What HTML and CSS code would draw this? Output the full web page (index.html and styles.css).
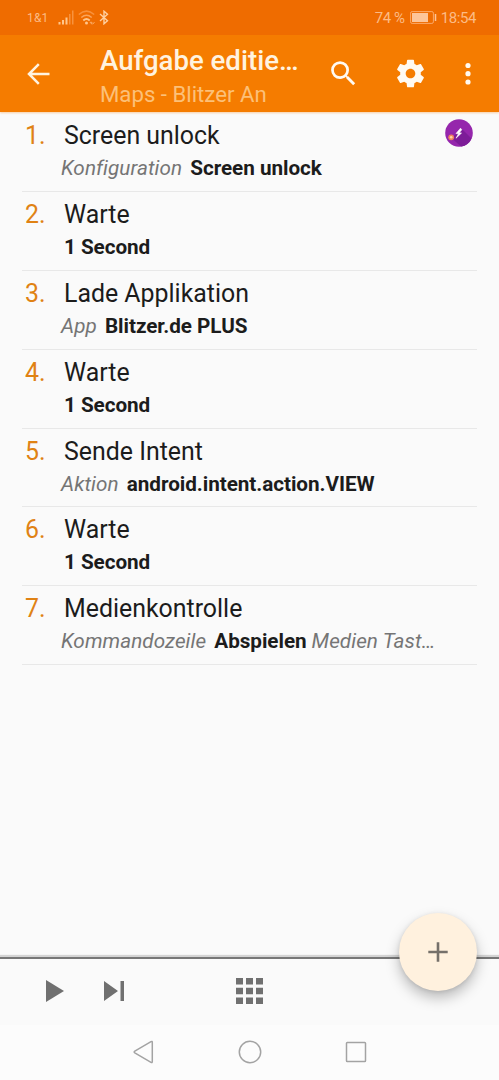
FILE: index.html
```html
<!DOCTYPE html>
<html lang="de">
<head>
    <meta charset="UTF-8">
    <meta name="viewport" content="width=device-width, initial-scale=1.0">
    <title>Aufgabe editieren</title>
    <link rel="stylesheet" href="styles.css">
</head>
<body>
    <div class="screen">
        <!-- Status bar -->
        <div class="status">
            <span class="carrier">1&amp;1</span>
            <svg class="signal" width="17" height="15" viewBox="0 0 17 15">
                <path d="M0.5 12h2v2.500h-2zM4 10h2v4.500h-2zM7.500 7.500h2v7h-2z" fill="#ffc68c"/>
                <path d="M11 4h1.500v10.500h-1.500zM14 0.500h1.500v14h-1.500z" fill="#f8923d"/>
            </svg>
            <svg class="wifi" width="18" height="15" viewBox="0 0 18 15">
                <path d="M0.800 4.500Q8.500-2.300 16.200 4.500" fill="none" stroke="#f8923d" stroke-width="1.500"/>
                <path d="M3.300 7.500Q8.500 3 13.700 7.500" fill="none" stroke="#faa55c" stroke-width="1.500"/>
                <path d="M5.300 10.500Q8.500 7.500 11.700 10.500" fill="none" stroke="#ffc68c" stroke-width="1.800"/>
                <circle cx="8.500" cy="13" r="1.500" fill="#ffc68c"/>
                <path d="M12 12.300h2v2zM15 14l1.500-2" stroke="#faa55c" fill="#faa55c"/>
            </svg>
            <svg class="bluetooth" width="10" height="15" viewBox="0 0 10 15">
                <path d="M1 4l7.500 6.700L5 13.800V1.200l3.500 3.100L1 11" fill="none" stroke="#ffd0a0" stroke-width="1.400"/>
            </svg>
            <span class="percent">74 %</span>
            <svg class="battery" width="27" height="13" viewBox="0 0 27 13">
                <rect x="0.600" y="0.600" width="22.800" height="11.800" rx="1.500" fill="none" stroke="#fba968"/>
                <rect x="2" y="2" width="16" height="9" fill="#fdc598"/>
                <path d="M25.500 3v7" stroke="#fdc598" stroke-width="1.500"/>
            </svg>
            <span class="clock">18:54</span>
        </div>

        <!-- Action bar -->
        <header class="toolbar">
            <svg class="back" width="24" height="22" viewBox="0 0 24 22">
                <path d="M22.500 11H2M11.800 1.200L2 11l9.800 9.800" fill="none" stroke="#fff3e0" stroke-width="2.500"/>
            </svg>
            <div class="heading">
                <h1>Aufgabe editie…</h1>
                <p>Maps - Blitzer An</p>
            </div>
            <svg class="search" width="33" height="33" viewBox="0 0 24 24" fill="#fffaf2">
                <path d="M15.500 14h-.79l-.28-.27A6.471 6.471 0 0 0 16 9.500 6.500 6.500 0 1 0 9.500 16c1.610 0 3.090-.59 4.230-1.570l.27.28v.79l5 4.990L20.490 19l-4.990-5zm-6 0C7.010 14 5 11.990 5 9.500S7.010 5 9.500 5 14 7.010 14 9.500 11.990 14 9.500 14z"/>
            </svg>
            <svg class="gear" width="33" height="33" viewBox="0 0 24 24" fill="#fffaf2">
                <path d="M19.430 12.980c.04-.32.07-.64.07-.98s-.03-.66-.07-.98l2.110-1.650c.19-.15.24-.42.12-.64l-2-3.460c-.12-.22-.39-.3-.61-.22l-2.490 1c-.52-.4-1.080-.73-1.690-.98l-.38-2.650C14.460 2.180 14.250 2 14 2h-4c-.25 0-.46.18-.49.42l-.38 2.650c-.61.25-1.170.59-1.690.98l-2.490-1c-.23-.09-.49 0-.61.22l-2 3.460c-.13.22-.07.49.12.64l2.110 1.650c-.04.32-.07.65-.07.98s.03.66.07.98l-2.110 1.650c-.19.15-.24.42-.12.64l2 3.460c.12.22.39.3.61.22l2.490-1c.52.4 1.080.73 1.690.98l.38 2.650c.03.24.24.42.49.42h4c.25 0 .46-.18.49-.42l.38-2.650c.61-.25 1.170-.59 1.690-.98l2.490 1c.23.09.49 0 .61-.22l2-3.460c.12-.22.07-.49-.12-.64l-2.110-1.650zM12 15.500c-1.930 0-3.500-1.570-3.500-3.500s1.570-3.500 3.500-3.500 3.500 1.570 3.500 3.500-1.570 3.500-3.500 3.500z"/>
            </svg>
            <svg class="more" width="8" height="24" viewBox="0 0 8 24" fill="#fffaf2">
                <circle cx="4" cy="3.500" r="2.600"/>
                <circle cx="4" cy="11.700" r="2.600"/>
                <circle cx="4" cy="20" r="2.600"/>
            </svg>
        </header>

        <!-- Action list -->
        <ol class="actions">
            <li class="action">
                <span class="num">1.</span>
                <span class="name">Screen unlock</span>
                <svg class="plugin" width="28" height="28" viewBox="0 0 28 28">
                    <circle cx="14" cy="14" r="13.800" fill="#9526ac"/>
                    <path d="M17 10l9.500 9.500A13.800 13.800 0 0 1 16 27.600L6.500 19z" fill="#7d1c98"/>
                    <path d="M15.500 9.200l-4.500 5.300 2.500.3-2.500 4.400 5.500-5.100-2.300-.4 2.600-2.900z" fill="#fff" stroke="#fff" stroke-width=".6"/>
                    <circle cx="6.200" cy="18.300" r="2.900" fill="#ef8060"/>
                    <circle cx="6.200" cy="18.300" r="1.300" fill="#ffd6a0"/>
                </svg>
                <p class="detail"><i>Konfiguration</i> <b>Screen unlock</b></p>
            </li>
            <li class="action">
                <span class="num">2.</span>
                <span class="name">Warte</span>
                <p class="detail plain"><b>1 Second</b></p>
            </li>
            <li class="action">
                <span class="num">3.</span>
                <span class="name">Lade Applikation</span>
                <p class="detail"><i>App</i> <b>Blitzer.de PLUS</b></p>
            </li>
            <li class="action">
                <span class="num">4.</span>
                <span class="name">Warte</span>
                <p class="detail plain"><b>1 Second</b></p>
            </li>
            <li class="action">
                <span class="num">5.</span>
                <span class="name">Sende Intent</span>
                <p class="detail"><i>Aktion</i> <b>android.intent.action.VIEW</b></p>
            </li>
            <li class="action">
                <span class="num">6.</span>
                <span class="name">Warte</span>
                <p class="detail plain"><b>1 Second</b></p>
            </li>
            <li class="action">
                <span class="num">7.</span>
                <span class="name">Medienkontrolle</span>
                <p class="detail"><i>Kommandozeile</i> <b>Abspielen</b><i class="next">Medien Tast…</i></p>
            </li>
        </ol>

        <!-- Bottom bar -->
        <div class="bottom">
            <svg class="play" width="18" height="22" viewBox="0 0 18 22"><path d="M0 0l18 11L0 22z" fill="#707070"/></svg>
            <svg class="step" width="20" height="20" viewBox="0 0 20 20"><path d="M0 0l14 10L0 20zM16.500 0h3.500v20h-3.500z" fill="#707070"/></svg>
            <svg class="grid" width="27" height="26" viewBox="0 0 27 26">
                <path d="M0 0h7v6.500H0zM10 0h7v6.500h-7zM20 0h7v6.500h-7zM0 9.800h7v6.500H0zM10 9.800h7v6.500h-7zM20 9.800h7v6.500h-7zM0 19.500h7V26H0zM10 19.500h7V26h-7zM20 19.500h7V26h-7z" fill="#707070"/>
            </svg>
            <div class="fab">
                <svg width="20" height="20" viewBox="0 0 20 20"><path d="M10 .3v19.400M.3 10h19.400" stroke="#75706a" stroke-width="2.600"/></svg>
            </div>
        </div>

        <!-- System navigation -->
        <nav class="navbar">
            <svg width="22" height="24" viewBox="0 0 22 24"><path d="M1.800 11.100L18 1.600q1.300-.6 1.300.8v19.200q0 1.400-1.300.8L1.800 12.900q-1.300-.9 0-1.800z" fill="none" stroke="#a3a3a3" stroke-width="1.500"/></svg>
            <svg width="24" height="24" viewBox="0 0 24 24"><circle cx="12" cy="12" r="10.700" fill="none" stroke="#a3a3a3" stroke-width="1.500"/></svg>
            <svg width="22" height="22" viewBox="0 0 22 22"><rect x="1.500" y="1.500" width="19" height="19" rx=".8" fill="none" stroke="#a3a3a3" stroke-width="1.500"/></svg>
        </nav>
    </div>
</body>
</html>
```
FILE: styles.css
```css
/* Reset styles */
* {
    margin: 0;
    padding: 0;
    box-sizing: border-box;
}

body {
    font-family: Roboto, sans-serif;
    background-color: #fafafa;
    color: #1c1c1c;
}

svg {
    display: block;
    flex: none;
}

.screen {
    display: flex;
    flex-direction: column;
    width: 499px;
    height: 1080px;
    overflow: hidden;
}

/* Status bar */
.status {
    display: flex;
    align-items: center;
    height: 35px;
    padding: 0 23px 0 27px;
    background-color: #ef6c00;
    color: #fcbb85;
    font-size: 15px;
    letter-spacing: -0.4px;
    white-space: nowrap;
}

.carrier {
    width: 31px;
    font-size: 12px;
    letter-spacing: 0.2px;
}

.wifi {
    margin-left: 3px;
}

.bluetooth {
    margin-left: 3px;
}

.percent {
    margin-left: auto;
}

.battery {
    margin: 0 4px 0 5px;
}

/* Toolbar */
.toolbar {
    display: flex;
    align-items: center;
    height: 77px;
    padding: 0 27px;
    background-color: #f57c00;
    box-shadow: 0 1px 2px rgba(245, 124, 0, 0.35);
    white-space: nowrap;
}

.heading {
    width: 200px;
    margin-left: 49px;
    margin-right: 27px;
    padding-top: 8px;
}

h1 {
    color: #fff3e0;
    font-size: 27.6px;
    font-weight: 500;
    line-height: 32px;
}

.heading p {
    color: #fcc078;
    font-size: 22.2px;
    line-height: 34px;
}

.gear {
    margin-left: 34px;
}

.more {
    margin-left: auto;
}

/* Action list */
.actions {
    flex: 1;
    padding: 1px 22px 0;
    list-style: none;
}

.action {
    display: grid;
    grid-template-columns: 39px 1fr auto;
    grid-template-rows: 30px 26px;
    row-gap: 4px;
    height: 78.9px;
    padding: 8px 4px 0 3px;
    border-bottom: 1px solid #e8e8e8;
    white-space: nowrap;
}

.num,
.name {
    font-size: 24.9px;
    line-height: 30px;
}

.num {
    color: #e08214;
}

.plugin {
    margin-top: -2px;
}

.detail {
    grid-column: 2 / 4;
    margin-left: -3px;
    font-size: 20.7px;
    line-height: 26px;
}

.detail.plain {
    margin-left: 0;
}

.detail b {
    letter-spacing: -0.05px;
}

.detail i {
    margin-right: 3px;
    color: #757575;
    letter-spacing: 0.06px;
}

.detail .next {
    margin-left: 5px;
}

/* Bottom bar */
.bottom {
    position: relative;
    display: flex;
    align-items: center;
    height: 68px;
    padding: 0 0 2px 46px;
    border-top: 2px solid #777;
    box-shadow: 0 -2px 1px #d4d4d4;
}

.step {
    margin-left: 40px;
}

.grid {
    margin-left: 112px;
}

/* Floating add button, overlaps the top edge of the bar */
.fab {
    position: absolute;
    right: 22px;
    top: -46px;
    display: flex;
    align-items: center;
    justify-content: center;
    width: 78px;
    height: 78px;
    border-radius: 50%;
    background-color: #fff1de;
    box-shadow: 0 7px 14px rgba(0, 0, 0, 0.25), 0 1px 4px rgba(0, 0, 0, 0.1);
}

/* System navigation */
.navbar {
    display: flex;
    align-items: center;
    justify-content: center;
    gap: 83px;
    height: 55px;
    padding: 0 0 1px 0;
    background-color: #fcfcfc;
}
```
